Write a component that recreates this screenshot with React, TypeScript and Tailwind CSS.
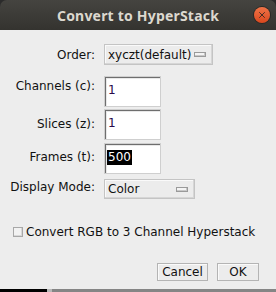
import { X } from 'lucide-react'

const dlgFont = { fontFamily: '"DejaVu Sans", sans-serif' }

function Choice({ label, width }: { label: string; width: string }) {
  return (
    <div
      className={`${width} flex items-center justify-between bg-[#ececec] border border-[#c4c4c4] shadow-[inset_-1px_-1px_0_#d6d6d6,inset_1px_1px_0_#fafafa] pl-[3px] pr-[6px] text-[12px] text-[#111]`}
    >
      <span>{label}</span>
      <span className="w-[12px] h-[5px] border border-[#9a9a9a] bg-[#f4f4f4] shadow-[inset_-1px_-1px_0_#c8c8c8]" />
    </div>
  )
}

function NumField({ value, selected }: { value: string; selected?: boolean }) {
  return (
    <div className="w-[57px] h-[31px] bg-white border border-[#cfcfcf] shadow-[inset_1px_1px_0_#6e6e6e,inset_2px_2px_0_#e8e8e8] flex items-center pl-[2px] pb-[2px] text-[12px]">
      {selected ? (
        <span className="bg-black text-white px-[1px] leading-[15px]">{value}</span>
      ) : (
        <span className="text-[#2a0a4a] pl-[1px] leading-[15px]">{value}</span>
      )}
    </div>
  )
}

function Label({ text }: { text: string }) {
  return <div className="text-right text-[12px] text-[#111] pr-[1px]">{text}</div>
}

export default function App() {
  return (
    <div className="w-[276px] h-[292px] bg-[#2b2b2b] flex flex-col overflow-hidden" style={dlgFont}>
      {/* title bar */}
      <div className="h-[30px] shrink-0 rounded-t-[7px] bg-gradient-to-b from-[#454440] to-[#34332f] relative flex items-center justify-center">
        <span
          className="text-[14px] font-bold text-[#dcd8cf] tracking-[0.2px]"
          style={{ fontFamily: '"Noto Sans", "DejaVu Sans", sans-serif' }}
        >
          Convert to HyperStack
        </span>
        <div className="absolute left-[254px] top-[7px] w-[16px] h-[16px] rounded-full bg-gradient-to-b from-[#f07346] to-[#d9471d] flex items-center justify-center shadow-[0_0_0_1px_#2a2926]">
          <X size={10} strokeWidth={2.2} className="text-[#3a2a22]" />
        </div>
      </div>

      {/* body */}
      <div className="flex-1 bg-[#ededed] flex flex-col">
        <div className="grid grid-cols-[96px_auto] gap-x-[8px] items-center mt-[14px]">
          <Label text="Order:" />
          <div className="flex">
            <div className="h-[21px] flex">
              <Choice label="xyczt(default)" width="w-[109px]" />
            </div>
          </div>

          <Label text="Channels (c):" />
          <div className="mt-[11px]">
            <NumField value="1" />
          </div>

          <Label text="Slices (z):" />
          <div className="mt-[2px]">
            <NumField value="1" />
          </div>

          <Label text="Frames (t):" />
          <div className="mt-[3px]">
            <NumField value="500" selected />
          </div>

          <Label text="Display Mode:" />
          <div className="mt-[5px] flex">
            <div className="h-[20px] flex">
              <Choice label="Color" width="w-[91px]" />
            </div>
          </div>
        </div>

        <div className="flex items-center mt-[24px] pl-[13px] text-[12px] text-[#111]">
          <span className="w-[10px] h-[10px] bg-[#f2f2f2] border border-[#a8a8a8] shadow-[inset_-1px_-1px_0_#d8d8d8] mr-[3px]" />
          <span>Convert RGB to 3 Channel Hyperstack</span>
        </div>

        <div className="flex justify-end gap-[9px] pr-[17px] mt-[22px]">
          <button className="w-[51px] h-[18px] bg-[#ececec] border border-[#b4b4b4] shadow-[inset_1px_1px_0_#fafafa] text-[12px] text-[#111] leading-none">
            Cancel
          </button>
          <button className="w-[42px] h-[18px] bg-[#ececec] border border-[#b4b4b4] shadow-[inset_1px_1px_0_#fafafa] text-[12px] text-[#111] leading-none">
            OK
          </button>
        </div>
      </div>

      {/* bottom strip */}
      <div className="h-[3px] shrink-0 flex">
        <div className="w-[47px] bg-black" />
        <div className="w-[5px] bg-[#b8b8b8]" />
        <div className="flex-1 bg-[#858585]" />
      </div>
    </div>
  )
}
